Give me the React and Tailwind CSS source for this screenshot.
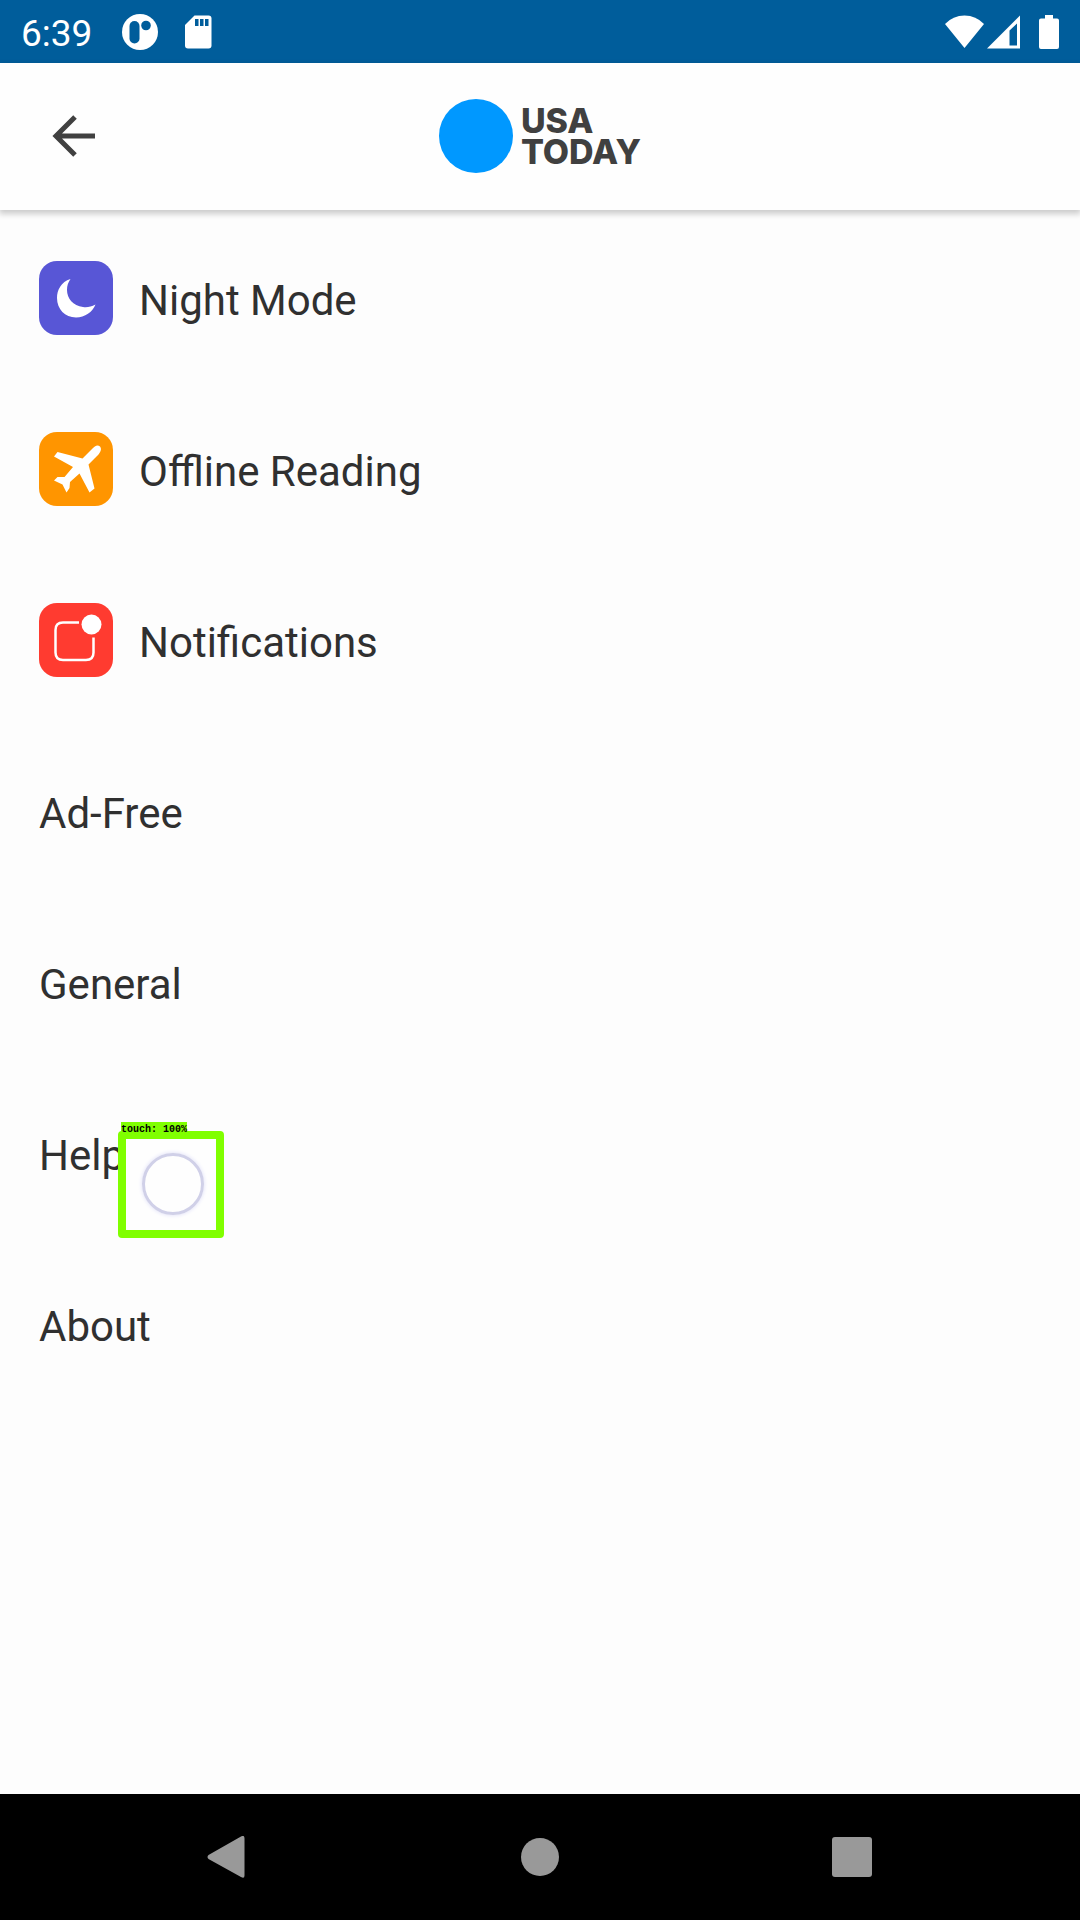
import React from "react";

function StatusBar() {
  return (
    <div className="flex h-[63px] items-center bg-[#005d9b] px-[21px] text-white">
      <span className="pt-[4px] text-[37px] leading-[44px]">6:39</span>
      <svg className="ml-[30px] h-9 w-9" viewBox="0 0 36 36" role="img" aria-label="App notification">
        <circle cx="18" cy="18" r="18" fill="#fff" />
        <rect x="7.500" y="7" width="10" height="22.500" rx="5" fill="#005d9b" />
        <circle cx="24" cy="11.500" r="4.800" fill="#005d9b" />
      </svg>
      <svg className="ml-[26px] h-[34px] w-7" viewBox="0 0 28 34" role="img" aria-label="SD card">
        <path d="M10.500 0.500H24.500Q27.500 0.500 27.500 3.500V30.500Q27.500 33.500 24.500 33.500H4Q1 33.500 1 30.500V10Z" fill="#fff" />
        <path d="M11 4h3.500v7H11zM16 4h3.500v7H16zM21 4h3.500v7H21z" fill="#005d9b" />
      </svg>
      <div className="ml-auto flex items-center">
        <svg className="h-[34px] w-[39px]" viewBox="0 0 39 34" role="img" aria-label="Wi-Fi">
          <path d="M0 9Q8 0.500 19.500 0.500T39 9L19.500 33Z" fill="#fff" />
        </svg>
        <svg className="ml-[3px] h-[34px] w-[33px]" viewBox="0 0 33 34" role="img" aria-label="Mobile signal">
          <path fillRule="evenodd" d="M33 0.500V33.500H0ZM30 8.500L22.500 15.500V30.500H30Z" fill="#fff" />
        </svg>
        <svg className="ml-[19px] h-[34px] w-5" viewBox="0 0 20 34" role="img" aria-label="Battery">
          <path d="M6 0h8v3.500h4q2 0 2 2V32q0 2-2 2H2q-2 0-2-2V5.500q0-2 2-2h4z" fill="#fff" />
        </svg>
      </div>
    </div>
  );
}

function Header() {
  return (
    <header className="grid h-[147px] grid-cols-[1fr_auto_1fr] items-center bg-[#fefefe] px-[52px] pb-[2px] shadow-[0_3px_6px_1px_rgba(0,0,0,0.2)]">
      <button type="button" aria-label="Back" className="flex h-[42px] w-[44px] items-center">
        <svg className="h-[42px] w-[44px]" viewBox="0 0 44 42" fill="none" stroke="#404040" strokeWidth="5">
          <path d="M43 21H5M23 2L4 21L23 40" />
        </svg>
      </button>
      <h1 className="flex items-center gap-2 font-['Inter','Liberation_Sans',sans-serif] text-[34px] font-extrabold leading-[31px] text-[#404040]">
        <span className="h-[74px] w-[74px] rounded-full bg-[#0098ff]" />
        <span>USA<br />TODAY</span>
      </h1>
    </header>
  );
}

function MoonIcon() {
  return (
    <svg className="h-[74px] w-[74px]" viewBox="0 0 74 74" aria-hidden="true">
      <rect width="74" height="74" rx="18" fill="#5856d6" />
      <path d="M31.500 18C22 21 18 29 18 37C18 48 26 56.500 37 56.500C46 56.500 53.500 51 56.500 43.500C52 46 48 46.500 44 46C34 44.500 28 37.500 28 29C28 25 29 21.500 31.500 18Z" fill="#fff" />
    </svg>
  );
}

function PlaneIcon() {
  return (
    <svg className="h-[74px] w-[74px]" viewBox="0 0 74 74" aria-hidden="true">
      <rect width="74" height="74" rx="18" fill="#ff9500" />
      <path d="M61 14.500C63 17 61.500 20 59.500 22.500L49.500 32.500L55.500 56.500L50.500 60.500L40.500 41.500L31 50L30.500 56L27.500 60.500L23.500 52.500L15 48.500L18.500 45L25.500 45L34 35L15 24.500L18.500 20L43.500 26.500L53.500 16.500C55.500 14.200 58.500 12 61 14.500Z" fill="#fff" />
    </svg>
  );
}

function BadgeIcon() {
  return (
    <svg className="h-[74px] w-[74px]" viewBox="0 0 74 74" aria-hidden="true">
      <rect width="74" height="74" rx="18" fill="#ff3b30" />
      <path d="M40 19.500H24Q16.500 19.500 16.500 27V49.500Q16.500 57 24 57H47Q54.500 57 54.500 49.500V34.500" fill="none" stroke="#fff" strokeWidth="2.500" />
      <circle cx="52.500" cy="21.500" r="10" fill="#fff" />
    </svg>
  );
}

function TouchMarker() {
  return (
    <div className="pointer-events-none absolute left-[118px] top-16 h-[107px] w-[106px] rounded-[4px] border-8 border-[#80ff00] bg-[#fefefe]">
      <span className="absolute -left-[5px] -top-[17px] h-[12px] whitespace-nowrap bg-[#80ff00] font-['Liberation_Mono',monospace] text-[10px] font-bold leading-[15px] text-black">
        touch: 100%
      </span>
      <div className="absolute left-4 top-[14px] h-[62px] w-[62px] rounded-full border-[3px] border-[#d0d0e8] shadow-[0_0_4px_#dcdcf8]" />
    </div>
  );
}

const items = [
  { label: "Night Mode", Icon: MoonIcon },
  { label: "Offline Reading", Icon: PlaneIcon },
  { label: "Notifications", Icon: BadgeIcon },
  { label: "Ad-Free" },
  { label: "General" },
  { label: "Help", touched: true },
  { label: "About" },
];

function NavigationBar() {
  return (
    <nav aria-label="System" className="grid h-[126px] grid-cols-3 bg-black px-[72px]">
      <button type="button" aria-label="Back" className="flex items-center justify-center pr-1">
        <svg className="h-[42px] w-[38px]" viewBox="0 0 38 42" fill="#999">
          <path d="M34 0.500Q37.500-1.500 37.500 2.500V39.500Q37.500 43 34 41L1.500 23Q-0.500 21 1.500 19Z" />
        </svg>
      </button>
      <button type="button" aria-label="Home" className="flex items-center justify-center">
        <span className="h-[38px] w-[38px] rounded-full bg-[#999]" />
      </button>
      <button type="button" aria-label="Overview" className="flex items-center justify-center">
        <span className="h-10 w-10 rounded-[3px] bg-[#999]" />
      </button>
    </nav>
  );
}

export default function App() {
  return (
    <div className="flex min-h-screen flex-col bg-[#fdfdfd] font-['Roboto',sans-serif]">
      <StatusBar />
      <Header />
      <main className="flex-1 pt-[2px]">
        <ul>
          {items.map(({ label, Icon, touched }) => (
            <li key={label} className="relative">
              <button type="button" className="flex h-[171px] w-full items-center gap-[26px] px-[39px] text-left text-[42px] leading-[50px] text-[#303030]">
                {Icon && <Icon />}
                <span className="pt-[6px]">{label}</span>
              </button>
              {touched && <TouchMarker />}
            </li>
          ))}
        </ul>
      </main>
      <NavigationBar />
    </div>
  );
}
